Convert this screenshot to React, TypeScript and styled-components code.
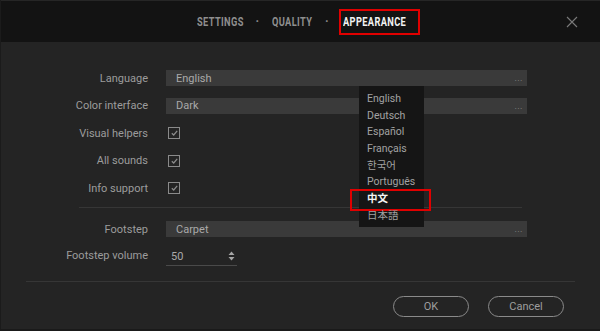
import styled, { createGlobalStyle } from "styled-components";

const GlobalStyle = createGlobalStyle`
  html, body {
    margin: 0;
    padding: 0;
    background: #242424;
  }
  *, *::before, *::after {
    box-sizing: border-box;
  }
`;

const languages = ["English", "Deutsch", "Español", "Français", "한국어", "Português", "中文", "日本語"];

type FieldProps = {
  label: string;
  children: React.ReactNode;
};

const Field = ({ label, children }: FieldProps) => (
  <>
    <Label>{label}</Label>
    <Control>{children}</Control>
  </>
);

const Check = () => (
  <CheckBox>
    <svg width="7" height="6" viewBox="0 0 7 6" fill="none">
      <path d="M0.8 3.2 L2.7 5 L6.2 0.8" stroke="#8c8c8c" strokeWidth="1.2" />
    </svg>
  </CheckBox>
);

export default function App() {
  return (
    <>
      <GlobalStyle />
      <Window>
        <Header>
          <span />
          <Tabs>
            <Tab $w={45}>
              <TabText>SETTINGS</TabText>
            </Tab>
            <Dot>·</Dot>
            <Tab $w={40}>
              <TabText>QUALITY</TabText>
            </Tab>
            <Dot>·</Dot>
            <Tab $w={81} $active>
              <TabText>APPEARANCE</TabText>
            </Tab>
          </Tabs>
          <Close aria-label="close">
            <svg width="12" height="12" viewBox="0 0 12 12">
              <path d="M1 1 L11 11 M11 1 L1 11" stroke="#7a7a7a" strokeWidth="1.1" />
            </svg>
          </Close>
        </Header>

        <Body>
          <Form>
            <Field label="Language">
              <Select>
                English
                <Ellipsis>...</Ellipsis>
                <Menu>
                  {languages.map((l) => (
                    <MenuItem key={l} $selected={l === "中文"}>
                      {l}
                    </MenuItem>
                  ))}
                </Menu>
              </Select>
            </Field>
            <Field label="Color interface">
              <Select>
                Dark
                <Ellipsis>...</Ellipsis>
              </Select>
            </Field>
            <Field label="Visual helpers">
              <Check />
            </Field>
            <Field label="All sounds">
              <Check />
            </Field>
            <Field label="Info support">
              <Check />
            </Field>
          </Form>

          <Divider />

          <Form $tight>
            <Field label="Footstep">
              <Select>
                Carpet
                <Ellipsis>...</Ellipsis>
              </Select>
            </Field>
            <Field label="Footstep volume">
              <Spin>
                50
                <Arrows>
                  <svg width="7" height="10" viewBox="0 0 7 10">
                    <path d="M3.5 0.5 L6.5 4 L0.5 4 Z M0.5 6 L6.5 6 L3.5 9.5 Z" fill="#a5a5a5" />
                  </svg>
                </Arrows>
              </Spin>
            </Field>
          </Form>

          <Footer>
            <Button>OK</Button>
            <Button>Cancel</Button>
          </Footer>
        </Body>
      </Window>
    </>
  );
}

const Window = styled.div`
  width: 600px;
  height: 331px;
  display: flex;
  flex-direction: column;
  background: #242424;
  border-left: 1px solid #1b1b1b;
  border-bottom: 2px solid #1a1a1a;
  font-family: Roboto, "Noto Sans CJK KR", "Noto Sans CJK SC", sans-serif;
  overflow: hidden;
`;

const Header = styled.div`
  height: 42px;
  flex: none;
  display: grid;
  grid-template-columns: 1fr auto 1fr;
  align-items: center;
  background: #131313;
  border-top: 1px solid #262626;
`;

const Tabs = styled.div`
  display: flex;
  align-items: center;
  gap: 13px;
  padding-left: 16px;
`;

const Tab = styled.div<{ $w: number; $active?: boolean }>`
  display: flex;
  align-items: center;
  width: ${(p) => p.$w}px;
  height: 26px;
  overflow: visible;
  color: ${(p) => (p.$active ? "#f2f2f2" : "#8e8e8e")};
  padding-left: ${(p) => (p.$active ? "2px" : "0")};
  border: ${(p) => (p.$active ? "2px solid #e00000" : "none")};
  margin-left: ${(p) => (p.$active ? "-3px" : "0")};
`;

const TabText = styled.span`
  display: inline-block;
  white-space: nowrap;
  font-family: Roboto, sans-serif;
  font-weight: 700;
  font-size: 12.5px;
  letter-spacing: 0.5px;
  transform: scaleX(0.74);
  transform-origin: left center;
`;

const Dot = styled.span`
  color: #8a8a8a;
  font-size: 12px;
  font-weight: 700;
`;

const Close = styled.button`
  justify-self: end;
  margin-right: 21px;
  width: 14px;
  height: 14px;
  padding: 0;
  border: none;
  background: none;
  display: flex;
  align-items: center;
  justify-content: center;
`;

const Body = styled.div`
  flex: 1;
  display: flex;
  flex-direction: column;
`;

const Form = styled.div<{ $tight?: boolean }>`
  display: grid;
  grid-template-columns: 147px 361px;
  grid-auto-rows: 16px;
  column-gap: 18px;
  row-gap: ${(p) => (p.$tight ? "10px" : "11.5px")};
  padding-top: ${(p) => (p.$tight ? "13px" : "28px")};
  align-items: center;
`;

const Label = styled.div`
  text-align: right;
  font-size: 11px;
  color: #9c9c9c;
  white-space: nowrap;
`;

const Control = styled.div`
  display: flex;
  align-items: center;
  height: 16px;
`;

const Select = styled.div`
  position: relative;
  width: 100%;
  height: 16px;
  display: flex;
  align-items: center;
  padding-left: 10px;
  background: #3a3a3a;
  font-size: 11px;
  color: #a9a9a9;
`;

const Ellipsis = styled.span`
  margin-left: auto;
  margin-right: 4px;
  font-size: 9px;
  color: #8a8a8a;
  letter-spacing: 0.5px;
`;

const Menu = styled.ul`
  position: absolute;
  z-index: 2;
  left: 193px;
  top: 16px;
  width: 65px;
  margin: 0;
  padding: 5px 0 2px 8px;
  list-style: none;
  background: #151515;
`;

const MenuItem = styled.li<{ $selected?: boolean }>`
  position: relative;
  height: 16.7px;
  line-height: 16.7px;
  font-size: 10.5px;
  color: ${(p) => (p.$selected ? "#f4f4f4" : "#a2a2a2")};
  font-weight: ${(p) => (p.$selected ? 700 : 400)};

  &::after {
    content: "";
    display: ${(p) => (p.$selected ? "block" : "none")};
    position: absolute;
    left: -17px;
    top: -2.5px;
    width: 81px;
    height: 22px;
    border: 2.5px solid #e00000;
  }
`;

const CheckBox = styled.div`
  width: 12px;
  height: 12px;
  margin-left: 2px;
  border: 1.5px solid #8a8a8a;
  display: flex;
  align-items: center;
  justify-content: center;
`;

const Spin = styled.div`
  width: 71px;
  height: 16px;
  display: flex;
  align-items: center;
  padding-left: 5px;
  font-size: 11px;
  color: #a9a9a9;
  border-bottom: 1px solid #4a4a4a;
  margin-top: 5px;
  padding-bottom: 2px;
`;

const Arrows = styled.span`
  margin-left: auto;
  margin-right: 2px;
  display: flex;
`;

const Divider = styled.div`
  height: 1px;
  margin: 11px 78px 0 78px;
  background: #363636;
`;

const Footer = styled.div`
  margin: auto 25px 0 25px;
  padding: 14px 11px 12px 0;
  border-top: 1px solid #363636;
  display: flex;
  justify-content: flex-end;
  gap: 19px;
`;

const Button = styled.button`
  width: 76px;
  height: 21px;
  border-radius: 11px;
  border: 1.5px solid #8a8a8a;
  background: transparent;
  color: #9e9e9e;
  font-family: Roboto, sans-serif;
  font-size: 11px;
  padding: 0;
`;
